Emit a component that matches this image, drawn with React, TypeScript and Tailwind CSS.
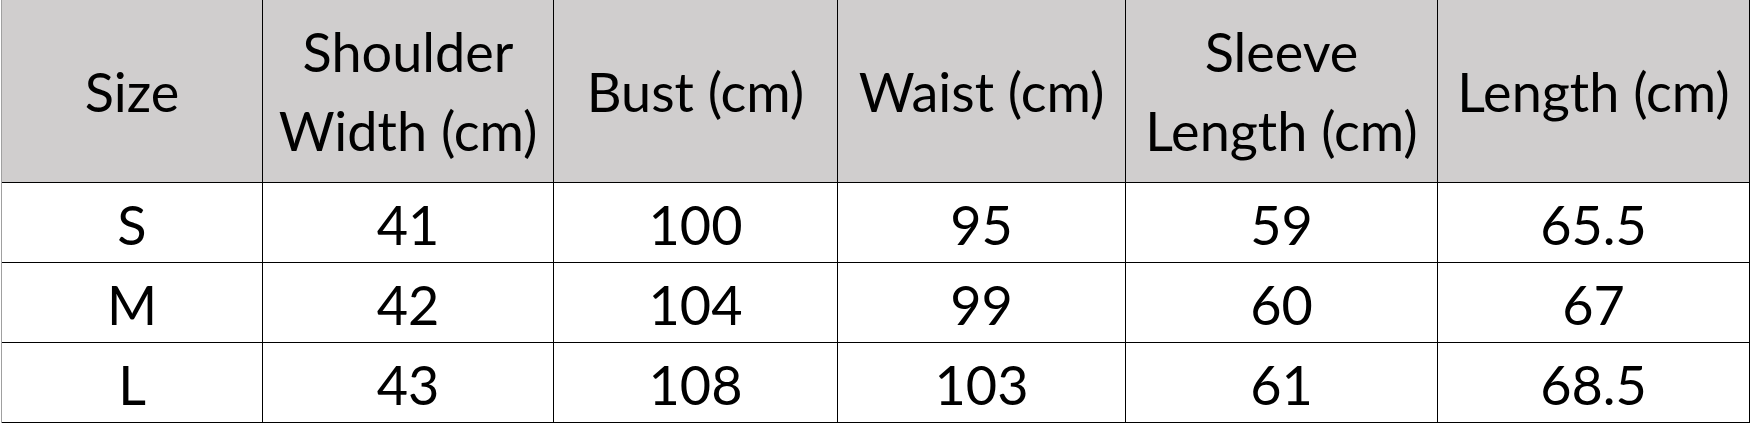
const columns = [
  { w: 'w-[261px]', label: ['Size'] },
  { w: 'w-[291px]', label: ['Shoulder', 'Width (cm)'] },
  { w: 'w-[284px]', label: ['Bust (cm)'] },
  { w: 'w-[288px]', label: ['Waist (cm)'] },
  { w: 'w-[312px]', label: ['Sleeve', 'Length (cm)'] },
  { w: 'w-[312px]', label: ['Length (cm)'] },
]

const rows = [
  ['S', '41', '100', '95', '59', '65.5'],
  ['M', '42', '104', '99', '60', '67'],
  ['L', '43', '108', '103', '61', '68.5'],
]

export default function App() {
  return (
    <div
      className="h-[425px] w-[1751px] overflow-hidden bg-white pl-px text-black"
      style={{ fontFamily: 'Lato, "Open Sans", sans-serif' }}
    >
      <div className="flex w-fit flex-col border-l border-[#a0a0a0]">
        <div className="flex h-[183px] bg-[#d0cece]">
          {columns.map((c, i) => (
            <div
              key={i}
              className={`${c.w} flex flex-col items-center justify-center border-r border-b border-black text-[54px] leading-[79px]`}
            >
              {c.label.map((l) => (
                <span key={l} className="whitespace-nowrap">
                  {l}
                </span>
              ))}
            </div>
          ))}
        </div>
        {rows.map((r, ri) => (
          <div key={ri} className="flex h-[80px]">
            {r.map((v, i) => (
              <div
                key={i}
                className={`${columns[i].w} flex items-center justify-center border-r border-b border-black pt-[4px] text-[54px] leading-none`}
              >
                {v}
              </div>
            ))}
          </div>
        ))}
      </div>
    </div>
  )
}
